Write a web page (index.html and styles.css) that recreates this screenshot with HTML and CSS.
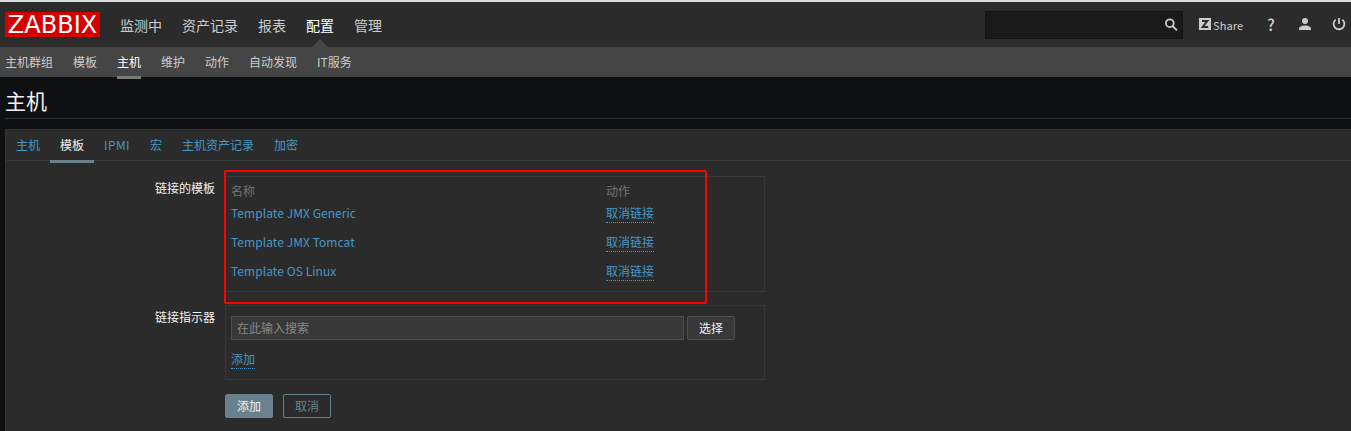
FILE: index.html
```html
<!DOCTYPE html>
<html lang="zh-CN">
<head>
<meta charset="utf-8">
<title>主机</title>
<link rel="stylesheet" href="styles.css">
</head>
<body>
<header class="header">
  <a class="logo">ZABBIX</a>
  <nav class="main-nav">
    <a>监测中</a><a>资产记录</a><a>报表</a><a class="selected">配置</a><a>管理</a>
  </nav>
  <div class="search">
    <svg class="icon-search" viewBox="0 0 14 14"><circle cx="5.8" cy="5.2" r="3.9"/><path d="M8.600 8l4.300 4.400"/></svg>
  </div>
  <a class="share"><span class="share-z"><svg viewBox="0 0 12 12"><path d="M3 3h5.300L3.700 9H9.200"/></svg></span><span>Share</span></a>
  <a class="help">?</a>
  <svg class="icon-user" viewBox="0 0 12 12"><circle cx="6" cy="3" r="3"/><path d="M0 12v-1.4C0 8.800 3.200 7.500 6 7.500s6 1.300 6 3.100V12z"/></svg>
  <svg class="icon-power" viewBox="0 0 12 12"><path d="M6 0v6M2.700 1.600a5.400 5.400 0 1 0 6.600 0"/></svg>
</header>
<nav class="sub-nav">
  <a>主机群组</a><a>模板</a><a class="selected">主机</a><a>维护</a><a>动作</a><a>自动发现</a><a>IT服务</a>
</nav>
<h1 class="title">主机</h1>
<main class="panel">
  <div class="tabs">
    <a>主机</a><a class="active">模板</a><a class="latin">IPMI</a><a>宏</a><a>主机资产记录</a><a>加密</a>
  </div>
  <div class="row linked">
    <div class="label">链接的模板</div>
    <div class="box">
      <div class="line head"><span>名称</span><span>动作</span></div>
      <div class="line"><a class="name">Template JMX Generic</a><a class="action">取消链接</a></div>
      <div class="line"><a class="name">Template JMX Tomcat</a><a class="action">取消链接</a></div>
      <div class="line"><a class="name">Template OS Linux</a><a class="action">取消链接</a></div>
      <div class="highlight"></div>
    </div>
  </div>
  <div class="row indicator">
    <div class="label">链接指示器</div>
    <div class="box">
      <div class="picker"><div class="input">在此输入搜索</div><div class="btn grey">选择</div></div>
      <a class="action">添加</a>
    </div>
  </div>
  <div class="buttons"><div class="btn primary">添加</div><div class="btn alt">取消</div></div>
</main>
</body>
</html>
```
FILE: styles.css
```css
* { box-sizing: border-box; }
body {
  margin: 0;
  height: 431px;
  overflow: hidden;
  background: #0e1012;
  color: #f2f2f2;
  font: 12px/18px "Noto Sans CJK SC", sans-serif;
}
.header {
  display: flex;
  align-items: center;
  height: 47px;
  padding: 0 6px 0 5px;
  border-top: 2px solid #d9dcde;
  background: #2b2b2b;
  color: #ccc;
}
.logo {
  width: 95px;
  height: 25px;
  margin-right: 20px;
  background: #d40000;
  color: #fff;
  font: 24px/26px "DejaVu Sans", sans-serif;
  text-align: center;
}
.main-nav { display: flex; gap: 20px; height: 45px; font-size: 14px; line-height: 46px; }
.main-nav .selected { position: relative; color: #fff; }
.main-nav .selected::after {
  content: "";
  position: absolute;
  left: 6px;
  bottom: 0;
  border: 8px solid transparent;
  border-top: 0;
  border-bottom-color: #454545;
}
.search {
  display: flex;
  justify-content: flex-end;
  width: 198px;
  height: 28px;
  margin-left: auto;
  padding: 6px 4px;
  border: 1px solid #131313;
  background: #1a1a1a;
}
.icon-search { width: 14px; height: 14px; fill: none; stroke: #ccc; stroke-width: 1.8; }
.share { display: flex; align-items: center; gap: 2px; width: 45px; margin-left: 16px; font-size: 11px; line-height: 16px; letter-spacing: .1px; }
.share-z { width: 12px; height: 12px; margin-bottom: 2px; background: #ccc; }
.share-z svg { display: block; fill: none; stroke: #2b2b2b; stroke-width: 2; }
.help { width: 8px; margin-left: 23px; padding-bottom: 1px; font-size: 16px; font-weight: 500; }
.icon-user { width: 12px; height: 12px; margin: 0 0 2px 24px; fill: #ccc; }
.icon-power { width: 12px; height: 12px; margin: 0 0 2px 22px; fill: none; stroke: #ccc; stroke-width: 1.8; overflow: visible; }
.sub-nav {
  display: flex;
  gap: 20px;
  height: 30px;
  padding-left: 5px;
  background: #454545;
  color: #ccc;
  line-height: 29px;
}
.sub-nav .selected { height: 32px; border-bottom: 3px solid #7b7b7b; color: #fff; }
.title {
  height: 42px;
  margin: 0 0 10px 5px;
  border-bottom: 1px solid #303030;
  font-size: 21px;
  font-weight: 400;
  line-height: 46px;
}
.panel {
  height: 310px;
  margin-left: 5px;
  border: 1px solid #303030;
  border-right: 0;
  background: #2b2b2b;
}
.tabs { display: flex; height: 31px; border-bottom: 1px solid #383838; color: #4796c4; line-height: 29px; }
.tabs a { padding: 0 10px; }
.tabs .latin { width: 46px; letter-spacing: .4px; }
.tabs .active { height: 33px; border-bottom: 3px solid #69808d; color: #f2f2f2; }
.row { display: flex; gap: 10px; }
.label { width: 209px; padding-top: 3px; text-align: right; }
.box { position: relative; width: 540px; padding: 5px; border: 1px solid #383838; }
.linked { height: 116px; margin-top: 15px; }
.line { display: grid; grid-template-columns: 375px 1fr; height: 29px; align-items: start; color: #4796c4; }
.line a { justify-self: start; }
.line .name { letter-spacing: .06px; }
.line.head { height: 22px; color: #737373; }
.action { border-bottom: 1px dotted #4796c4; color: #4796c4; }
.highlight { position: absolute; left: -2px; top: -7px; width: 483px; height: 134px; border: 2px solid #f00; border-radius: 2px; }
.indicator { height: 75px; margin-top: 13px; }
.indicator .box { padding-top: 10px; }
.picker { display: flex; gap: 3px; margin-bottom: 10px; }
.indicator .action { display: block; width: 24px; line-height: 18px; }
.input { width: 453px; height: 24px; padding-left: 5px; border: 1px solid #4f4f4f; background: #383838; color: #888; line-height: 22px; }
.btn { width: 48px; height: 24px; border: 1px solid #69808d; border-radius: 2px; line-height: 22px; text-align: center; }
.grey { border-color: #4f4f4f; background: #383838; }
.primary { background: #69808d; }
.alt { color: #69808d; }
.buttons { display: flex; gap: 10px; margin: 14px 0 0 219px; }
```
